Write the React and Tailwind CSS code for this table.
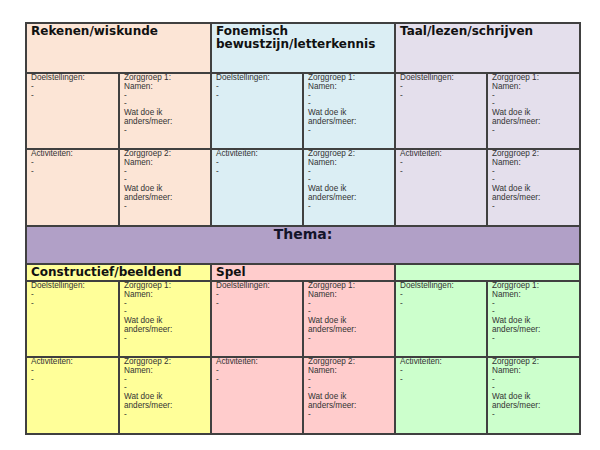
import React from "react";

const subjectsTop = [
  { title: "Rekenen/wiskunde", bg: "bg-[#fce5d6]" },
  { title: "Fonemisch bewustzijn/letterkennis", bg: "bg-[#dbeef4]" },
  { title: "Taal/lezen/schrijven", bg: "bg-[#e4dfec]" },
];

const subjectsBottom = [
  { title: "Constructief/beeldend", bg: "bg-[#ffff99]" },
  { title: "Spel", bg: "bg-[#ffcccc]" },
  { title: "", bg: "bg-[#ccffcc]" },
];

const cell = "border-2 border-[#404040] align-top px-[4px] pt-0";

const PlanCells = ({ label, group, bg }) => (
  <>
    <td className={`${cell} ${bg}`}>
      <div>{label}:</div>
      <div>-</div>
      <div>-</div>
    </td>
    <td className={`${cell} ${bg}`}>
      <div>Zorggroep {group}:</div>
      <div>Namen:</div>
      <div>-</div>
      <div>-</div>
      <div>Wat doe ik</div>
      <div>anders/meer:</div>
      <div>-</div>
    </td>
  </>
);

const Block = ({ subjects, headerHeight }) => (
  <>
    <tr className={headerHeight}>
      {subjects.map((s, i) => (
        <td
          key={i}
          colSpan={2}
          className={`${cell} ${s.bg} font-['DejaVu_Sans',sans-serif] font-bold text-[12px] leading-[13px] text-[#111] pt-[1px]`}
        >
          {s.title}
        </td>
      ))}
    </tr>
    <tr className="h-[76px]">
      {subjects.map((s, i) => (
        <PlanCells key={i} label="Doelstellingen" group={1} bg={s.bg} />
      ))}
    </tr>
    <tr className="h-[77px]">
      {subjects.map((s, i) => (
        <PlanCells key={i} label="Activiteiten" group={2} bg={s.bg} />
      ))}
    </tr>
  </>
);

export default function App() {
  return (
    <div className="w-[600px] h-[450px] bg-white pt-[22px] pl-[25px]">
      <table className="w-[554px] table-fixed border-collapse font-['Liberation_Sans',Arial,sans-serif] text-[8.2px] leading-[8.8px] text-[#333]">
        <colgroup>
          <col className="w-[93px]" />
          <col className="w-[92px]" />
          <col className="w-[92px]" />
          <col className="w-[92px]" />
          <col className="w-[92px]" />
          <col className="w-[93px]" />
        </colgroup>
        <tbody>
          <Block subjects={subjectsTop} headerHeight="h-[50px]" />
          <tr className="h-[38px]">
            <td
              colSpan={6}
              className={`${cell} bg-[#b1a0c7] text-center font-['DejaVu_Sans',sans-serif] font-bold text-[14px] leading-[15px] text-[#14142a]`}
            >
              Thema:
            </td>
          </tr>
          <Block subjects={subjectsBottom} headerHeight="h-[17px]" />
        </tbody>
      </table>
    </div>
  );
}
